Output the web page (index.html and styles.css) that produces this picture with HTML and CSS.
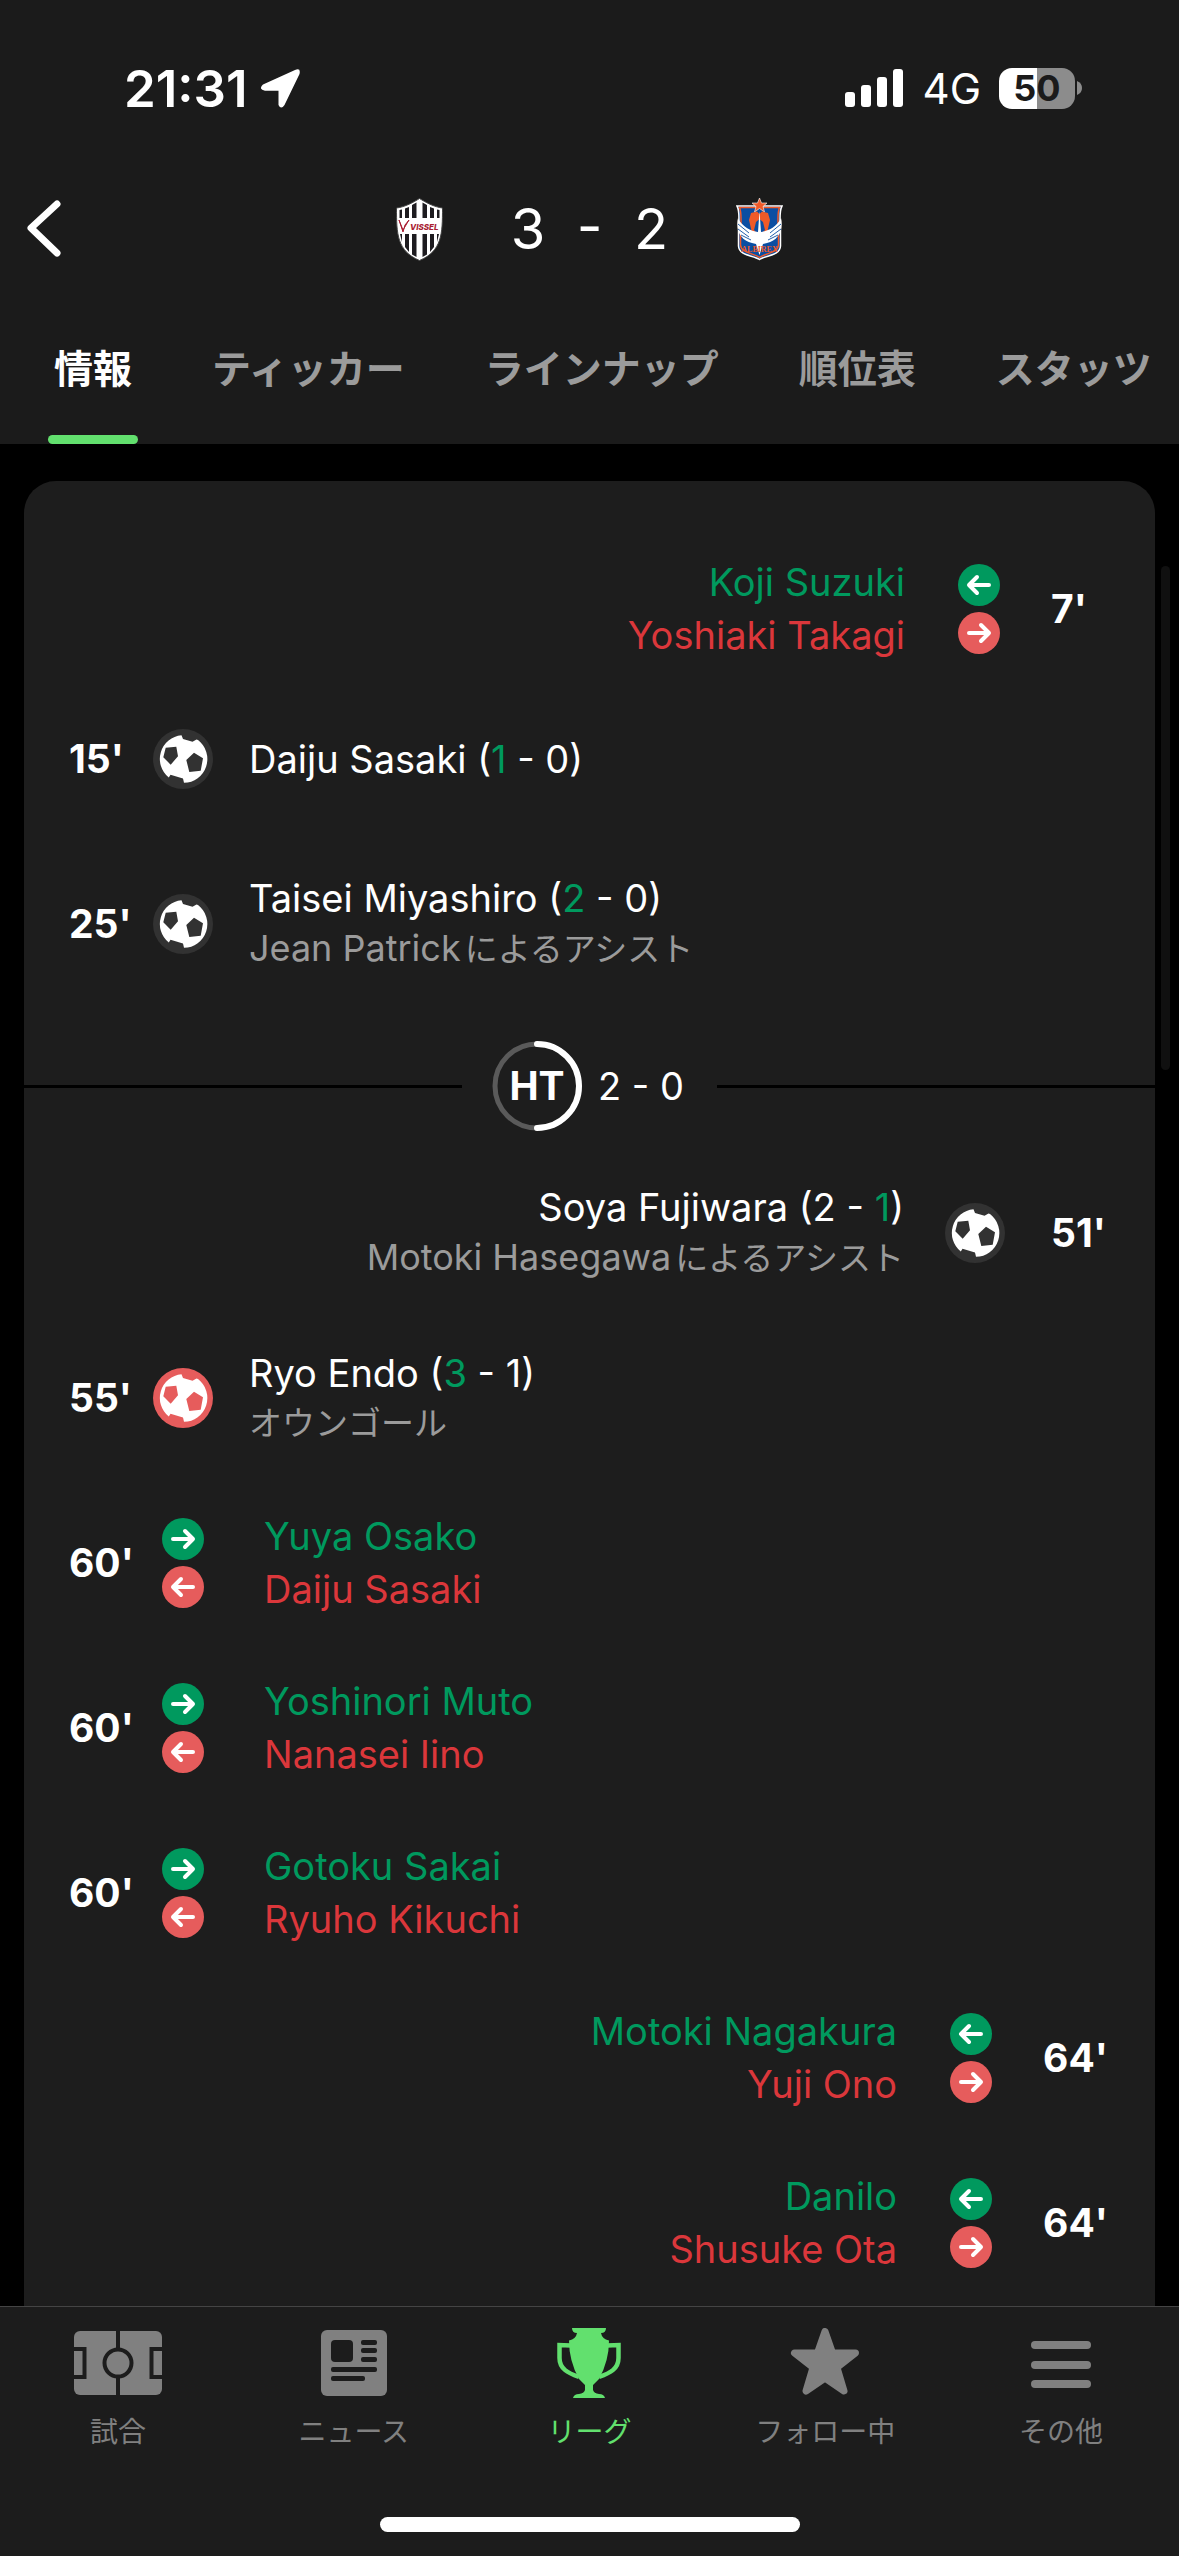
FILE: index.html
```html
<!DOCTYPE html>
<html lang="ja">
  <head>
    <meta charset="utf-8">
    <meta name="viewport" content="width=device-width, initial-scale=1">
    <title>3 - 2</title>
    <link rel="stylesheet" href="styles.css">
  </head>
  <body>
    <svg class="defs" aria-hidden="true">
      <symbol id="ball" viewBox="0 0 60 60">
        <circle cx="30" cy="30" r="30" fill="var(--ball-bg)"/>
        <path d="M28.5 6.3L30 10L39.5 12.800L43.500 10.500L45 11.1A23.8 23.8 0 0 1 31 53.800L30 49.5L17.5 45.8L15.8 48.6A23.8 23.8 0 0 1 28.5 6.3Z" fill="#fff"/>
        <path d="M12.7 18.7L23.3 17.7L25 27.3L17.7 35.7L10.3 28.3ZM41 23.7L50 29.3L47.7 41.7L36.3 43L33.3 31Z" fill="var(--ball-bg)"/>
      </symbol>
      <symbol id="arrow-right" viewBox="0 0 42 42">
        <circle cx="21" cy="21" r="21" fill="currentColor"/>
        <path d="M11 21H31M23 13L31 21L23 29" fill="none" stroke="#fff" stroke-width="4" stroke-linecap="round" stroke-linejoin="round"/>
      </symbol>
      <symbol id="arrow-left" viewBox="0 0 42 42">
        <circle cx="21" cy="21" r="21" fill="currentColor"/>
        <path d="M31 21H11M19 13L11 21L19 29" fill="none" stroke="#fff" stroke-width="4" stroke-linecap="round" stroke-linejoin="round"/>
      </symbol>
    </svg>

    <header class="header">
      <div class="status">
        <div class="status-side">
          <span class="clock">21:31</span>
          <svg class="location" viewBox="0 0 39 39"><path d="M34 1Q40-1.500 38.500 5L23.500 36Q20 41 17.500 36V21.800H4Q-3 20.500 2 15.500Z" fill="#fff"/></svg>
        </div>
        <div class="status-side">
          <svg class="signal" viewBox="0 0 58 38" fill="#fff"><rect y="23" width="10" height="15" rx="3"/><rect x="16" y="16" width="10" height="22" rx="3"/><rect x="32" y="8" width="10" height="30" rx="3"/><rect x="48" width="10" height="38" rx="3"/></svg>
          <span class="network">4G</span>
          <div class="battery">50</div>
          <svg class="battery-tip" viewBox="0 0 5 14"><path d="M0 0Q5 2 5 7T0 14Z" fill="#8c8c8c"/></svg>
        </div>
      </div>

      <div class="match">
        <button class="back" type="button" aria-label="戻る">
          <svg viewBox="0 0 34 58"><path d="M30 4L4 28L30 53" fill="none" stroke="#fff" stroke-width="7" stroke-linecap="round" stroke-linejoin="round"/></svg>
        </button>
        <div class="scoreline">
          <svg class="crest" viewBox="0 0 47 63">
            <path d="M23.500.5C29 4 38 9 46.500 10C46.500 36 46 53 23.500 62.500C1 53 .5 36 .5 10C9 9 18 4 23.500.5Z" fill="#fff" stroke="#444" />
            <path d="M3.500 12L6 11.500V20H3.500ZM9 10.500L13 9V20H9ZM16 7L20.500 4.500V20H16ZM26.500 4.500L31 7V20H26.500ZM34 9L38 10.500V20H34ZM41 11.500L43.500 12V20H41ZM4 36H6V44ZM9 36H13V54L9 49ZM16 36H20.500V59L16 56.500ZM26.500 36H31V56.500L26.500 59ZM34 36H38V49L34 54ZM41 36H43L41 44Z" fill="#1d1b1f"/>
            <path d="M3 22L7 32L13 22L9 27L7 34L5 28Z" fill="#a91d32" stroke="#a91d32"/>
            <text x="14" y="32" class="crest-vissel">VISSEL</text>
          </svg>
          <h1 class="score">3&nbsp; -&nbsp; 2</h1>
          <svg class="crest" viewBox="0 0 47 63">
            <path d="M1 8H46C43 13 44 22 44.500 32V48C44 58 30 57 23.500 61.500C17 57 3 58 2.500 48V32C3 22 4 13 1 8Z" fill="#0b4ea2" stroke="#fff" stroke-width="1.500"/>
            <path d="M3.500 9.500H43.500C41 15 42 24 42.500 33V47C42 55 30 55 23.500 59.500C17 55 5 55 4.500 47V33C5 24 6 15 3.500 9.500Z" fill="none" stroke="#f05a28" stroke-width="1.500"/>
            <path d="M23.500 0L25.500 5H31L27 8.500L28.500 14L23.500 10.500L18.500 14L20 8.500L16 5H21.500Z" fill="#f05a28" stroke="#fff" stroke-width=".6"/>
            <path d="M15 15L21 13.500L23.500 16L26 13.500L32 15L34 22L31 35L23.500 38L16 35L13 22Z" fill="#f05a28"/>
            <path d="M20 24L23.500 21L27 24L29 32L23.500 38L18 32Z" fill="#0b4ea2"/>
            <path d="M23.500 13L25 34C32 33 41 29 45 20C48 32 42 43 31 45L27 46L23.500 57L20 46L16 45C5 43-1 32 2 20C6 29 15 33 22 34Z" fill="#fff"/>
            <path d="M2 26L13 35M2 31L13 39M5 37L15 42M45 26L34 35M45 31L34 39M42 37L32 42" stroke="#0b4ea2" stroke-width=".9"/>
            <text x="23.500" y="54" class="crest-albirex">ALBIREX</text>
          </svg>
        </div>
      </div>

      <nav class="tabs">
        <a class="tab active" href="#info">情報</a>
        <a class="tab" href="#ticker">ティッカー</a>
        <a class="tab" href="#lineup">ラインナップ</a>
        <a class="tab" href="#table">順位表</a>
        <a class="tab" href="#stats">スタッツ</a>
      </nav>
    </header>

    <main class="content">
      <div class="card" id="info">
        <div class="event away">
          <span class="minute">7'</span>
          <div class="icons sub"><svg class="in"><use href="#arrow-left"/></svg><svg class="out"><use href="#arrow-right"/></svg></div>
          <div class="names"><p class="in">Koji Suzuki</p><p class="out">Yoshiaki Takagi</p></div>
        </div>
        <div class="event single">
          <span class="minute">15'</span>
          <svg class="icons ball"><use href="#ball"/></svg>
          <div class="goal"><p>Daiju Sasaki (<b>1</b> - 0)</p></div>
        </div>
        <div class="event">
          <span class="minute">25'</span>
          <svg class="icons ball"><use href="#ball"/></svg>
          <div class="goal"><p>Taisei Miyashiro (<b>2</b> - 0)</p><p class="detail"><span class="player">Jean Patrick</span>によるアシスト</p></div>
        </div>

        <div class="half">
          <svg class="half-ring" viewBox="0 0 90 90">
            <circle cx="45" cy="45" r="42" fill="none" stroke="#5a5a5a" stroke-width="5"/>
            <path d="M45 3A42 42 0 0 1 45 87" fill="none" stroke="#fff" stroke-width="6" stroke-linecap="round"/>
            <text x="45" y="59" class="half-label">HT</text>
          </svg>
          <span>2 - 0</span>
        </div>

        <div class="event away">
          <span class="minute">51'</span>
          <svg class="icons ball"><use href="#ball"/></svg>
          <div class="goal"><p>Soya Fujiwara (2 - <b>1</b>)</p><p class="detail"><span class="player">Motoki Hasegawa</span>によるアシスト</p></div>
        </div>
        <div class="event">
          <span class="minute">55'</span>
          <svg class="icons ball own"><use href="#ball"/></svg>
          <div class="goal"><p>Ryo Endo (<b>3</b> - 1)</p><p class="detail">オウンゴール</p></div>
        </div>
        <div class="event">
          <span class="minute">60'</span>
          <div class="icons sub"><svg class="in"><use href="#arrow-right"/></svg><svg class="out"><use href="#arrow-left"/></svg></div>
          <div class="names"><p class="in">Yuya Osako</p><p class="out">Daiju Sasaki</p></div>
        </div>
        <div class="event">
          <span class="minute">60'</span>
          <div class="icons sub"><svg class="in"><use href="#arrow-right"/></svg><svg class="out"><use href="#arrow-left"/></svg></div>
          <div class="names"><p class="in">Yoshinori Muto</p><p class="out">Nanasei Iino</p></div>
        </div>
        <div class="event">
          <span class="minute">60'</span>
          <div class="icons sub"><svg class="in"><use href="#arrow-right"/></svg><svg class="out"><use href="#arrow-left"/></svg></div>
          <div class="names"><p class="in">Gotoku Sakai</p><p class="out">Ryuho Kikuchi</p></div>
        </div>
        <div class="event away">
          <span class="minute">64'</span>
          <div class="icons sub"><svg class="in"><use href="#arrow-left"/></svg><svg class="out"><use href="#arrow-right"/></svg></div>
          <div class="names"><p class="in">Motoki Nagakura</p><p class="out">Yuji Ono</p></div>
        </div>
        <div class="event away">
          <span class="minute">64'</span>
          <div class="icons sub"><svg class="in"><use href="#arrow-left"/></svg><svg class="out"><use href="#arrow-right"/></svg></div>
          <div class="names"><p class="in">Danilo</p><p class="out">Shusuke Ota</p></div>
        </div>
      </div>
      <div class="scrollbar"></div>
    </main>

    <footer class="footer">
      <nav class="bottom-nav">
        <a class="nav-item" href="#matches">
          <svg viewBox="0 0 90 70">
            <rect x="1" y="3" width="88" height="64" rx="6" fill="currentColor"/>
            <path d="M45 3V20M45 50V67M1 21H11.500V49H1M89 21H78.500V49H89" fill="none" stroke="#1c1c1c" stroke-width="4"/>
            <circle cx="45" cy="35" r="13.500" fill="none" stroke="#1c1c1c" stroke-width="4"/>
          </svg>
          試合
        </a>
        <a class="nav-item" href="#news">
          <svg viewBox="0 0 90 70">
            <rect x="12" y="2" width="66" height="66" rx="6" fill="currentColor"/>
            <g fill="#1c1c1c"><rect x="22" y="12" width="22" height="22" rx="4"/><rect x="52" y="12" width="16" height="5" rx="2"/><rect x="52" y="20" width="16" height="5" rx="2"/><rect x="52" y="29" width="16" height="5" rx="2"/><rect x="22" y="39" width="46" height="5" rx="2"/><rect x="22" y="48" width="34" height="5" rx="2"/></g>
          </svg>
          ニュース
        </a>
        <a class="nav-item active" href="#leagues">
          <svg viewBox="0 0 90 70">
            <path d="M28 0H62Q62 5 57 5Q58 11 65 12.500Q65 33 55 51L49 57V62Q50 65.500 55 66Q60 66 61 70H29Q30 66 35 66Q40 65.500 41 62V57L35 51Q25 33 25 12.500Q32 11 33 5Q28 5 28 0Z" fill="currentColor"/>
            <path d="M27 17.500L15.500 17V30C15.500 41 24 45 35 49M63 17.500L74.500 17V30C74.500 41 66 45 55 49" fill="none" stroke="currentColor" stroke-width="4.500"/>
          </svg>
          リーグ
        </a>
        <a class="nav-item" href="#following">
          <svg viewBox="0 0 90 70"><path d="M45 3.500L52.500 25H75.500L57 39.500L64 63L45 50L26 63L33 39.500L14.500 25H37.500Z" fill="currentColor" stroke="currentColor" stroke-width="7" stroke-linejoin="round"/></svg>
          フォロー中
        </a>
        <a class="nav-item" href="#more">
          <svg viewBox="0 0 90 70" fill="currentColor"><rect x="15" y="13" width="60" height="8" rx="4"/><rect x="15" y="33" width="60" height="8" rx="4"/><rect x="15" y="52" width="60" height="8" rx="4"/></svg>
          その他
        </a>
      </nav>
      <div class="home-indicator"></div>
    </footer>
  </body>
</html>
```
FILE: styles.css
```css
* {
  box-sizing: border-box;
}

body {
  margin: 0;
  min-height: 100vh;
  display: flex;
  flex-direction: column;
  background-color: #000;
  color: #fff;
  font-family: Inter, "Noto Sans CJK JP", sans-serif;
  font-size: 38px;
}

p,
h1 {
  margin: 0;
}

a {
  color: inherit;
  text-decoration: none;
}

.defs {
  position: absolute;
  width: 0;
  height: 0;
}

/* header */
.header {
  background-color: #1b1b1b;
}

.status {
  display: flex;
  justify-content: space-between;
  height: 176px;
  padding: 0 97px 0 124px;
}

.status-side {
  display: flex;
  align-items: center;
  height: 176px;
}

.clock {
  font-size: 51px;
  font-weight: 600;
}

.location {
  width: 39px;
  height: 39px;
  margin-left: 13px;
}

.signal {
  width: 58px;
  height: 38px;
  margin-right: 20px;
}

.network {
  font-size: 42px;
  margin-right: 18px;
}

.battery {
  width: 76px;
  height: 41px;
  border-radius: 13px;
  background: linear-gradient(90deg, #fff 50%, #8c8c8c 50%);
  color: #1b1b1b;
  font-size: 36px;
  font-weight: 700;
  line-height: 41px;
  text-align: center;
}

.battery-tip {
  width: 5px;
  height: 14px;
  margin-left: 2px;
}

.match {
  display: grid;
  grid-template-columns: 1fr auto 1fr;
  align-items: center;
  height: 106px;
  padding: 0 27px;
}

.back {
  justify-self: start;
  width: 34px;
  height: 58px;
  padding: 0;
  border: none;
  background: none;
}

.back svg {
  display: block;
}

.scoreline {
  display: flex;
  align-items: center;
  gap: 68px;
}

.crest {
  width: 47px;
  height: 63px;
}

.crest-vissel {
  fill: #a91d32;
  font-size: 8px;
  font-weight: 800;
  font-style: italic;
}

.crest-albirex {
  fill: #f05a28;
  font-family: "Liberation Serif", serif;
  font-size: 8px;
  font-weight: 700;
  text-anchor: middle;
}

.score {
  font-size: 56px;
  font-weight: 400;
}

.tabs {
  display: flex;
  gap: 68px;
  height: 162px;
  padding-left: 48px;
  overflow: hidden;
  font-size: 39px;
  font-weight: 700;
  line-height: 58px;
  white-space: nowrap;
  color: #9b9b9b;
}

.tab {
  flex: none;
  display: flex;
  flex-direction: column;
  justify-content: space-between;
  align-items: center;
  padding: 58px 6px 0;
}

.tab.active {
  color: #fff;
}

.tab.active::after {
  content: "";
  width: 90px;
  height: 9px;
  margin: 0 -6px;
  border-radius: 5px;
  background-color: #62e06e;
}

/* event list */
.content {
  position: relative;
  flex: 1;
  display: flex;
  flex-direction: column;
  padding: 37px 24px 0;
}

.card {
  flex: 1;
  padding-top: 45px;
  border-radius: 32px 32px 0 0;
  background-color: #1d1d1d;
}

.event {
  display: flex;
  align-items: center;
  height: 165px;
  padding: 0 47px 0 45px;
}

.event.single {
  height: 135px;
  margin-bottom: 15px;
}

.event.away {
  flex-direction: row-reverse;
  text-align: right;
}

.minute {
  width: 84px;
  font-size: 39px;
  font-weight: 700;
}

.away .minute {
  width: auto;
  min-width: 57px;
  text-align: left;
}

.icons {
  flex: none;
  margin-right: 36px;
}

.ball {
  --ball-bg: #323232;
  width: 60px;
  height: 60px;
}

.ball.own {
  --ball-bg: #e65c5c;
}

.sub {
  display: flex;
  flex-direction: column;
  gap: 6px;
  margin: 0 60px 0 9px;
}

.sub svg {
  width: 42px;
  height: 42px;
}

.away .ball {
  margin: 0 46px 0 41px;
}

.away .sub {
  margin: 0 51px 0 53px;
}

.sub .in,
.names .in {
  color: #00995e;
}

.sub .out {
  color: #e65c5c;
}

.names .out {
  color: #db373b;
}

.names {
  line-height: 53px;
}

.goal {
  line-height: 50px;
}

.goal b {
  color: #00995e;
  font-weight: 400;
}

.detail {
  font-size: 33px;
  color: #9b9b9b;
}

.player {
  margin-right: 4px;
  font-size: 36px;
}

.half {
  display: flex;
  align-items: center;
  height: 128px;
  margin-top: 16px;
}

.half::before,
.half::after {
  content: "";
  flex: 1;
  height: 3px;
  background-color: #000;
}

.half-ring {
  width: 90px;
  height: 90px;
  margin: 0 16px 0 30px;
}

.half::after {
  margin-left: 33px;
}

.half-label {
  fill: #fff;
  font-size: 39px;
  font-weight: 700;
  text-anchor: middle;
}

.scrollbar {
  position: absolute;
  top: 122px;
  right: 9px;
  width: 9px;
  height: 504px;
  border-radius: 5px;
  background-color: #101010;
}

/* bottom bar */
.footer {
  position: sticky;
  bottom: 0;
  height: 250px;
  padding-bottom: 24px;
  display: flex;
  flex-direction: column;
  justify-content: space-between;
  align-items: center;
  border-top: 1px solid #444;
  background-color: #1c1c1c;
}

.bottom-nav {
  display: flex;
  width: 100%;
  padding-top: 21px;
}

.nav-item {
  flex: 1;
  display: flex;
  flex-direction: column;
  align-items: center;
  gap: 13px;
  font-size: 28px;
  line-height: 42px;
  color: #808080;
}

.nav-item svg {
  width: 90px;
  height: 70px;
}

.nav-item.active {
  color: #62e06e;
}

.home-indicator {
  width: 420px;
  height: 15px;
  border-radius: 8px;
  background-color: #fff;
}
```
